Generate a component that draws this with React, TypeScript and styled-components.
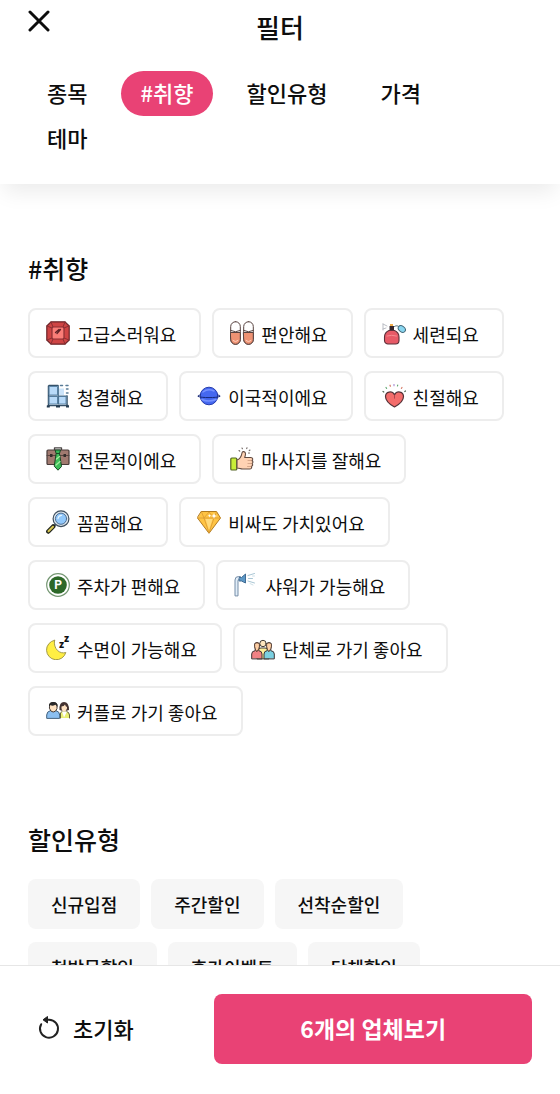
import React, { useState } from "react";
import styled, { createGlobalStyle, css } from "styled-components";

const GlobalStyle = createGlobalStyle`
  *, *::before, *::after { box-sizing: border-box; }
  body {
    margin: 0;
    background: #ffffff;
    color: #0d0d0d;
    font-family: "Noto Sans CJK KR", sans-serif;
  }
  button { font: inherit; color: inherit; cursor: pointer; }
`;

const Screen = styled.div`
  display: flex;
  flex-direction: column;
  height: 100vh;
  overflow: hidden;
`;

const Header = styled.header`
  position: relative;
  z-index: 1;
  flex: none;
  padding: 9px 28px 23px;
  background: #ffffff;
  box-shadow: 0 12px 20px -4px rgba(0, 0, 0, 0.08);
`;

const TitleBar = styled.div`
  display: grid;
  grid-template-columns: 1fr auto 1fr;
  align-items: start;
  margin-bottom: 26px;
`;

const CloseButton = styled.button`
  display: flex;
  width: 22px;
  padding: 1px 0;
  border: 0;
  background: none;
`;

const Title = styled.h1`
  margin: 0;
  font-size: 26px;
  font-weight: 500;
  line-height: 36px;
`;

const TabList = styled.nav`
  display: flex;
  flex-wrap: wrap;
  column-gap: 15px;
`;

const Tab = styled.button<{ $active: boolean }>`
  height: 45px;
  padding: 0 19px 3px;
  border: 0;
  border-radius: 24px;
  background: ${(p) => (p.$active ? "#e94275" : "transparent")};
  color: ${(p) => (p.$active ? "#ffffff" : "inherit")};
  font-size: 22px;
  font-weight: 500;
  line-height: 32px;
`;

const Content = styled.main`
  display: flex;
  flex: 1;
  flex-direction: column;
  gap: 85px;
  min-height: 0;
  padding: 66px 28px 28px;
  overflow-y: auto;
  scrollbar-width: none;
`;

const SectionTitle = styled.h2`
  margin: 0 0 22px;
  font-size: 25px;
  font-weight: 500;
  line-height: 36px;
`;

const ChipList = styled.div`
  display: flex;
  flex-wrap: wrap;
  gap: 13px 11px;
`;

const chip = css`
  display: flex;
  align-items: center;
  height: 50px;
  border-radius: 8px;
  font-size: 18px;
  line-height: 26px;
  white-space: nowrap;
`;

const TasteChip = styled.button`
  ${chip}
  gap: 7px;
  padding: 0 23px 0 16px;
  border: 2px solid #ededed;
  background: #ffffff;
  font-weight: 400;
`;

const ChipLabel = styled.span`
  padding-top: 1px;
`;

const DiscountChip = styled.button`
  ${chip}
  padding: 0 23px;
  border: 0;
  background: #f6f6f6;
  font-weight: 500;
`;

const Footer = styled.footer`
  display: grid;
  flex: none;
  grid-template-columns: 37fr 63fr;
  padding: 28px 28px 30px;
  border-top: 1px solid #e6e6e6;
  background: #ffffff;
`;

const ResetButton = styled.button`
  display: flex;
  align-items: center;
  gap: 13px;
  padding: 0 10px 2px;
  border: 0;
  background: none;
  font-size: 22px;
  font-weight: 500;
`;

const SubmitButton = styled.button`
  height: 70px;
  padding: 0 16px 2px;
  border: 0;
  border-radius: 8px;
  background: #e94275;
  color: #ffffff;
  font-size: 23px;
  font-weight: 700;
`;

const Icon = ({ size = 24, children }: { size?: number; children: React.ReactNode }) => (
  <svg
    width={size}
    height={size}
    viewBox="0 0 24 24"
    fill="none"
    strokeLinecap="round"
    strokeLinejoin="round"
    aria-hidden="true"
  >
    {children}
  </svg>
);

const Ruby = () => (
  <Icon>
    <path d="M5 .8h14L23.2 5v14L19 23.2H5L.8 19V5z" fill="#cf4444" stroke="#6b2529" strokeWidth="1.2" />
    <path d="M5 1l2 5M19 1l-2 5M1 5l5 2M23 5l-5 2M5 23l2-5M19 23l-2-5M1 19l5-2M23 19l-5-2" stroke="#8a2f33" />
    <rect x="6" y="6" width="12" height="12" rx="1.5" fill="#fa7d78" stroke="#8a2f33" strokeWidth="1.2" />
    <path d="M9.5 11.5l3.5-3M11 12.5l3.5-4" stroke="#5f2227" strokeWidth="1.3" />
  </Icon>
);

const Slippers = () => (
  <Icon>
    {[0.7, 13.7].map((x) => (
      <g key={x} stroke="#57423f">
        <rect x={x} y=".7" width="9.6" height="22.6" rx="4.8" fill="#ffffff" />
        <path d={`M${x} 11.5h9.6v7a4.8 4.8 0 0 1-9.6 0z`} fill="#ee9273" />
        <path d={`M${x} 9.5q4.8 2.6 9.6 0`} />
        <path d={`M${x + 2.3} 19.5q2.5 2.5 5 0`} stroke="#ffd0be" />
      </g>
    ))}
  </Icon>
);

const Perfume = () => (
  <Icon>
    <path d="M1 3v6M1 3l4 2M1 8l3-1" stroke="#b2b5bd" strokeWidth=".9" />
    <path d="M12.5 5.5c3-2 4 .5 6 1" stroke="#496878" />
    <ellipse cx="19.8" cy="8" rx="3.9" ry="2.8" transform="rotate(35 19.8 8)" fill="#89d6f0" stroke="#426879" />
    <path d="M8 3h3v3H8z" fill="#f2ad48" />
    <rect x="7.5" y="5" width="4.5" height="4" fill="#35252c" />
    <path d="M7 9.500h5.500q4.500 2 4.500 6.500v3.500a3.500 3.500 0 0 1-3.500 3.500h-7A3.500 3.500 0 0 1 2.500 19.500V16q0-4.500 4.500-6.500z" fill="#e75a67" stroke="#5c303a" strokeWidth="1.1" />
    <path d="M5 15q4.500-1.500 9.500 0" stroke="#f78b91" />
  </Icon>
);

const Windows = () => (
  <Icon>
    <path d="M3 1.5h9M2.500 2v19M2 21.500h20M21 12v9" stroke="#355169" strokeWidth="1.500" />
    <path d="M3.500 2.500h8v8.500h-8zM3.500 12.500h8v7.500h-8zM13 12.500h7v7.500h-7z" fill="#b8daf9" stroke="#5e88ab" />
    <path d="M13 4.500h5V11h-5z" fill="#cce4fa" />
    <path d="M12.300 2v18M3 12h18" stroke="#4b718f" strokeWidth="1.200" />
    <path d="M14.500 1.500h2M20 1.500h2M20.500 5h1.500M20.500 9h1.500" stroke="#587b97" strokeWidth="1.500" />
    <path d="M.8 21.500h3v2h-3zM10 21.500h4v2h-4zM20 21.500h3v2h-3z" fill="#243b50" />
  </Icon>
);

const Planet = () => (
  <Icon>
    <circle cx="12" cy="12" r="8.800" fill="#4568f0" stroke="#263cad" />
    <path d="M6 8q5-4 11-1M5 15.500q6 3 14 0" stroke="#7692ff" strokeWidth="1.500" />
    <path d="M3.400 11C1 11.300.5 12 1 12.400c3 1.600 19 1.600 22 0 .5-.5 0-1.100-2.300-1.400" stroke="#172878" />
  </Icon>
);

const Heart = () => (
  <Icon>
    <path d="M12.500 23C7 20 3.500 16 3.500 12.500c0-5 6.500-6.300 9-1.800 2.500-4.500 9-3.200 9 1.800 0 3.500-3.500 7.500-9 10.500z" fill="#f36c6b" stroke="#563238" strokeWidth="1.200" />
    <path d="M1 7.500l.8.500M22.800 7.500l.7-.5" stroke="#49634f" strokeWidth="1.200" />
    <path d="M4 3.500l.6.800M15.700 1l-.2 1" stroke="#60a770" strokeWidth="1.200" />
    <path d="M8 1.200l.4 1M20 3.500l-.6.800" stroke="#d57965" strokeWidth="1.200" />
    <path d="M12 .5v1.200" stroke="#ad92d6" strokeWidth="1.200" />
    <path d="M12.500 11.200v3" stroke="#ad454b" />
  </Icon>
);

const Briefcase = () => (
  <Icon>
    <path d="M8.500 3V.8h7V3" stroke="#4a4545" strokeWidth="1.300" />
    <rect x="1" y="3" width="22" height="14.500" rx="1" fill="#a17a70" stroke="#483b39" strokeWidth="1.200" />
    <path d="M1 8.500h22" stroke="#594641" />
    <path d="M4 7h2.500v3H4zM17.500 7H20v3h-2.500z" fill="#342d2b" />
    <path d="M9.500 3h5l-1 3.500h-3z" fill="#34b657" stroke="#174722" />
    <path d="M10.500 6.500h3l2 13-3.500 3.700L8.500 19.500z" fill="#3dbe59" stroke="#174722" />
    <path d="M10.500 12l3-2.500M10 18l4-3.500" stroke="#a5ec9f" strokeWidth="1.300" />
  </Icon>
);

const ThumbUp = () => (
  <Icon>
    <rect x=".8" y="11" width="6" height="12" rx="1" fill="#c8ed38" stroke="#536323" strokeWidth="1.200" />
    <path d="M7 13c3-1 4.500-4 5-7 .4-2.300 3.500-1.600 3.500.8 0 1.600-.4 2.500-.8 3.700h6c2.500 0 2.500 2.500 1 3 1.800.6 1.500 2.700.2 3 1.300.8.900 2.600-.5 2.900.8 1.400-.2 2.600-1.800 2.600h-7c-2.300 0-3-1-5.600-1z" fill="#ffd2b3" stroke="#614a40" strokeWidth="1.100" />
    <path d="M18 13.500h3.500M18 16.500h3.500M17.500 19.500H21" stroke="#cc9a7e" strokeWidth=".8" />
    <path d="M9 3.500l.8.700M12 1l.4.800M17 .8l-.3.800M20 3l-.8.700M18.500 6h1" stroke="#6c625f" strokeWidth="1.100" />
  </Icon>
);

const Magnifier = () => (
  <Icon>
    <path d="M9 15l-2 2" stroke="#424a55" strokeWidth="2" />
    <path d="M7.200 16.500L2.300 21.500" stroke="#252820" strokeWidth="4.500" />
    <path d="M7 16.700l-4.500 4.600" stroke="#d7c752" strokeWidth="2" />
    <circle cx="15" cy="8.700" r="7.900" fill="#dce6ed" stroke="#3e4e5e" strokeWidth="1.200" />
    <circle cx="15" cy="8.700" r="5.600" fill="#91c8fb" stroke="#506f93" />
    <path d="M12 8.500q.5-3 3.500-3.200" stroke="#e4f4ff" strokeWidth="1.300" />
  </Icon>
);

const Diamond = () => (
  <Icon>
    <path d="M4.500 1.500h15L23.500 8 12 23.300.5 8z" fill="#ffc444" stroke="#b17a20" />
    <path d="M8.500 9h7L12 20z" fill="#ffda7c" />
    <path d="M.8 8h22.400M4.500 2L7 8l5 15 5-15 2.500-6M7 8l5-6 5 6" stroke="#d99a35" strokeWidth=".8" />
    <path d="M17 3l.8 2.200L20 6l-2.200.8L17 9l-.8-2.200L14 6l2.200-.8zM12.500 4l.5 1.200 1.200.5-1.200.5-.5 1.200-.5-1.200-1.200-.5 1.200-.5z" fill="#ffffff" />
  </Icon>
);

const Parking = () => (
  <Icon>
    <circle cx="12" cy="12" r="11.300" fill="#ffffff" stroke="#759773" strokeWidth="1.200" />
    <circle cx="12" cy="12" r="8.800" fill="#2d6829" />
    <text x="12" y="16" fill="#ffffff" fontFamily="Roboto, sans-serif" fontSize="12" fontWeight="700" textAnchor="middle">P</text>
  </Icon>
);

const Shower = () => (
  <Icon>
    <path d="M1 22.500V7q0-3.500 3.500-3.500h2v3H5q-1 0-1 1.300v14.700z" fill="#e1edf8" stroke="#758da7" />
    <path d="M5.500 4.500h2L11.500 1v9L7.500 8h-2z" fill="#5c98c6" stroke="#416c94" />
    <path d="M14 2.500L20.500.5M14.500 5.500h4M14 8l6.500 2" stroke="#a9c6d4" />
    <path d="M18.500 3h2M16 10.500l3 1.500" stroke="#cfe1e8" />
  </Icon>
);

const SleepMark = styled.text`
  fill: #111111;
  font-family: Roboto, sans-serif;
  font-size: 10px;
  font-weight: 900;
`;

const Moon = () => (
  <Icon>
    <path d="M8.500 4.300A9.800 9.800 0 1 0 19.800 16.500C14 18.500 7 13 8.500 4.300z" fill="#ffee43" stroke="#a29949" />
    <SleepMark x="13" y="12">z</SleepMark>
    <SleepMark x="18" y="6">z</SleepMark>
  </Icon>
);

const Group = () => (
  <Icon>
    <circle cx="12" cy="7.500" r="3.200" fill="#ffe5bd" stroke="#443d38" />
    <path d="M6 22.500V15q0-3 4-3h4q4 0 4 3v7.500z" fill="#fff09a" stroke="#443d38" />
    <path d="M.7 22.500V18q0-3 3.500-3.300v-2.200q-2-6 1.800-6 3.800 0 1.800 6v2.200Q11 15 11 18v4.500z" fill="#f08184" stroke="#3c3434" />
    <path d="M13 22.500V18q0-3 3.200-3.300v-2.200q-2-6 1.800-6 3.800 0 1.800 6v2.200q3.500.3 3.500 3.300v4.500z" fill="#7bd0e1" stroke="#3c3434" />
    <path d="M4.200 12.800q-2-6 1.800-6 3.800 0 1.800 6L6 15.500zM16.200 12.800q-2-6 1.800-6 3.800 0 1.800 6L18 15.500z" fill="#ffd0a5" stroke="#5d4438" />
  </Icon>
);

const Couple = () => (
  <Icon>
    <path d="M.7 19v-3q0-3.500 4-4.500h5q4 1 4 4.500v3z" fill="#8bbff0" stroke="#41617e" />
    <path d="M14.500 19V14l2-2h3q4 1 4 4v3" fill="#e9ef74" stroke="#65633e" />
    <path d="M16 12.500l2 6 3-6z" fill="#ffffff" />
    <path d="M3.500 7Q3 3.500 7.200 3.500T11 7v2.500q-1 3.500-3.800 3.500T3.500 9.500z" fill="#ffe2c1" stroke="#443b36" />
    <path d="M3 8V6q.5-3 4.200-3T11.500 6v2L9.500 5.800Q6 7.500 4.500 6z" fill="#292929" />
    <path d="M13.500 11q-.5-8 4.500-8t5 8q-5 2-9.500 0z" fill="#443331" />
    <path d="M15.500 7.500q2.500 0 3.500-2 .5 2 2 2.500v1.500q-1 3-3 3t-2.500-3z" fill="#ffe2c1" />
  </Icon>
);

const tastes = [
  { label: "고급스러워요", Glyph: Ruby },
  { label: "편안해요", Glyph: Slippers },
  { label: "세련되요", Glyph: Perfume },
  { label: "청결해요", Glyph: Windows },
  { label: "이국적이에요", Glyph: Planet },
  { label: "친절해요", Glyph: Heart },
  { label: "전문적이에요", Glyph: Briefcase },
  { label: "마사지를 잘해요", Glyph: ThumbUp },
  { label: "꼼꼼해요", Glyph: Magnifier },
  { label: "비싸도 가치있어요", Glyph: Diamond },
  { label: "주차가 편해요", Glyph: Parking },
  { label: "샤워가 가능해요", Glyph: Shower },
  { label: "수면이 가능해요", Glyph: Moon },
  { label: "단체로 가기 좋아요", Glyph: Group },
  { label: "커플로 가기 좋아요", Glyph: Couple },
];

const discounts = ["신규입점", "주간할인", "선착순할인", "첫방문할인", "휴가이벤트", "단체할인"];

const tabs = ["종목", "#취향", "할인유형", "가격", "테마"];

export default function App() {
  const [activeTab, setActiveTab] = useState("#취향");

  return (
    <>
      <GlobalStyle />
      <Screen>
        <Header>
          <TitleBar>
            <CloseButton type="button" aria-label="닫기">
              <svg width="22" height="22" viewBox="0 0 22 22" aria-hidden="true">
                <path d="M2 2l18 18M20 2L2 20" stroke="#0d0d0d" strokeWidth="3" strokeLinecap="round" />
              </svg>
            </CloseButton>
            <Title>필터</Title>
          </TitleBar>
          <TabList>
            {tabs.map((tab) => (
              <Tab key={tab} type="button" $active={tab === activeTab} onClick={() => setActiveTab(tab)}>
                {tab}
              </Tab>
            ))}
          </TabList>
        </Header>

        <Content>
          <section>
            <SectionTitle>#취향</SectionTitle>
            <ChipList>
              {tastes.map(({ label, Glyph }) => (
                <TasteChip key={label} type="button">
                  <Glyph />
                  <ChipLabel>{label}</ChipLabel>
                </TasteChip>
              ))}
            </ChipList>
          </section>
          <section>
            <SectionTitle>할인유형</SectionTitle>
            <ChipList>
              {discounts.map((label) => (
                <DiscountChip key={label} type="button">
                  {label}
                </DiscountChip>
              ))}
            </ChipList>
          </section>
        </Content>

        <Footer>
          <ResetButton type="button">
            <svg width="22" height="24" viewBox="0 0 22 24" fill="none" aria-hidden="true">
              <path d="M3.200 8.200A9 9 0 1 0 11 3.700H7" stroke="#222222" strokeWidth="2" strokeLinecap="round" />
              <path d="M9.500.5v6.500L5 3.800z" fill="#222222" stroke="#222222" strokeLinejoin="round" />
            </svg>
            초기화
          </ResetButton>
          <SubmitButton type="button">6개의 업체보기</SubmitButton>
        </Footer>
      </Screen>
    </>
  );
}
